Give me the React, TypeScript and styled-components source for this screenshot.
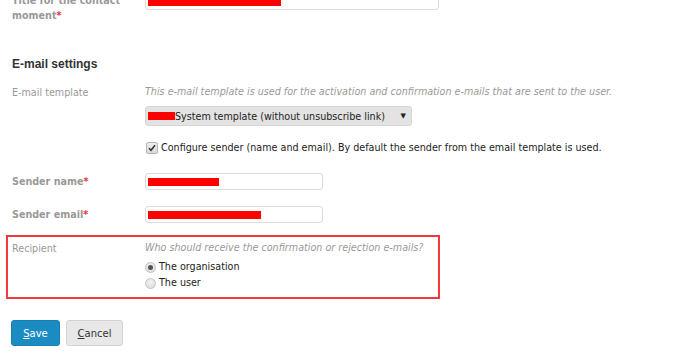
import React from "react";
import styled, { createGlobalStyle } from "styled-components";

const GlobalStyle = createGlobalStyle`
  body {
    margin: 0;
    background: #fff;
    font-family: "DejaVu Sans", Verdana, sans-serif;
    font-size: 9.6px;
    color: #333;
  }
`;

// Whole form.
const Page = styled.div`
  padding: 0 12px;
  margin-top: -7px;
  width: 676px;
`;

// One label / field line.
const FormRow = styled.div<{ $top?: number }>`
  display: flex;
  align-items: flex-start;
  margin-top: ${(p) => p.$top ?? 0}px;
`;

const Label = styled.div<{ $strong?: boolean; $center?: boolean }>`
  width: 133px;
  flex-shrink: 0;
  line-height: 15px;
  color: #999;
  font-weight: ${(p) => (p.$strong ? "bold" : "normal")};
  align-self: ${(p) => (p.$center ? "center" : "flex-start")};
`;

const Required = styled.span`
  color: #e8333a;
`;

const Field = styled.div`
  display: flex;
  flex-direction: column;
`;

const Help = styled.div`
  font-style: italic;
  color: #999;
  line-height: 14px;
`;

const Heading = styled.h3`
  margin: 33px 0 0;
  font-family: "Liberation Sans", Arial, sans-serif;
  font-size: 12px;
  line-height: 16px;
  font-weight: bold;
  color: #333;
`;

const TextInput = styled.div<{ $width: number }>`
  width: ${(p) => p.$width}px;
  height: 15px;
  border: 1px solid #dcdcdc;
  border-radius: 3px;
  background: #fff;
  box-sizing: content-box;
  display: flex;
  align-items: center;
  padding-left: 2px;
`;

const Redacted = styled.span<{ $width: number }>`
  display: inline-block;
  flex-shrink: 0;
  width: ${(p) => p.$width}px;
  height: 8px;
  background: #ff0000;
`;

const Select = styled.div`
  margin-top: 7px;
  width: 263px;
  height: 18px;
  background: #e3e3e3;
  border: 1px solid #d6d6d6;
  border-radius: 3px;
  display: flex;
  align-items: center;
  padding-left: 2px;
  color: #222;
  white-space: nowrap;
`;

const SelectText = styled.span`
  flex: 1;
`;

const Arrow = styled.span`
  font-size: 7px;
  margin-right: 5px;
`;

const CheckLine = styled.label`
  margin-top: 15px;
  display: flex;
  align-items: center;
  gap: 3px;
  line-height: 14px;
  color: #222;
  white-space: nowrap;
`;

const CheckBox = styled.span`
  width: 10px;
  height: 10px;
  margin-left: 1px;
  border: 1px solid #b5b5b5;
  border-radius: 2px;
  background: linear-gradient(#eee, #d8d8d8);
  display: flex;
  align-items: center;
  justify-content: center;
`;

const RecipientBox = styled.div`
  margin: 12px 0 0 -6px;
  width: 426px;
  border: 2px solid #f23a3a;
  padding: 4px 0 6px 4px;
`;

const RadioLine = styled.label<{ $top?: number }>`
  margin-top: ${(p) => p.$top ?? 0}px;
  display: flex;
  align-items: center;
  gap: 3px;
  line-height: 16px;
  color: #222;
`;

const RadioDot = styled.span<{ $on?: boolean }>`
  width: 11px;
  height: 11px;
  border-radius: 50%;
  border: 1px solid #c4c4c4;
  background: radial-gradient(circle at 50% 35%, #f2f2f2, #d9d9d9);
  display: flex;
  align-items: center;
  justify-content: center;
  box-sizing: border-box;
  &::after {
    content: "";
    display: ${(p) => (p.$on ? "block" : "none")};
    width: 5px;
    height: 5px;
    border-radius: 50%;
    background: #555;
  }
`;

const Actions = styled.div`
  margin: 21px 0 0 -1px;
  display: flex;
  gap: 6px;
`;

const Button = styled.button<{ $primary?: boolean; $width: number }>`
  width: ${(p) => p.$width}px;
  height: 26px;
  padding: 0;
  border-radius: 3px;
  font-family: "DejaVu Sans", Verdana, sans-serif;
  font-size: 10px;
  border: 1px solid ${(p) => (p.$primary ? "#1780b3" : "#d2d2d2")};
  background: ${(p) => (p.$primary ? "#1b8cc2" : "#e8e8e8")};
  color: ${(p) => (p.$primary ? "#fff" : "#333")};
  cursor: pointer;
  & u {
    text-decoration: underline;
  }
`;

const App = () => {
  return (
    <>
      <GlobalStyle />
      <Page>
        <FormRow>
          <Label $strong>
            Title for the contact moment<Required>*</Required>
          </Label>
          <TextInput $width={290}>
            <Redacted $width={133} />
          </TextInput>
        </FormRow>

        <Heading>E-mail settings</Heading>

        <FormRow $top={13}>
          <Label>E-mail template</Label>
          <Field>
            <Help>
              This e-mail template is used for the activation and confirmation
              e-mails that are sent to the user.
            </Help>
            <Select>
              <Redacted $width={27} />
              <SelectText>System template (without unsubscribe link)</SelectText>
              <Arrow>▼</Arrow>
            </Select>
            <CheckLine>
              <CheckBox>
                <svg width="8" height="8" viewBox="0 0 8 8">
                  <path d="M1 4.2 L3 6.3 L7 1.2" fill="none" stroke="#333" strokeWidth="1.5" />
                </svg>
              </CheckBox>
              Configure sender (name and email). By default the sender from the
              email template is used.
            </CheckLine>
          </Field>
        </FormRow>

        <FormRow $top={18}>
          <Label $strong $center>
            Sender name<Required>*</Required>
          </Label>
          <TextInput $width={174}>
            <Redacted $width={71} />
          </TextInput>
        </FormRow>

        <FormRow $top={16}>
          <Label $strong $center>
            Sender email<Required>*</Required>
          </Label>
          <TextInput $width={174}>
            <Redacted $width={113} />
          </TextInput>
        </FormRow>

        <RecipientBox>
          <FormRow>
            <Label>Recipient</Label>
            <Field>
              <Help>Who should receive the confirmation or rejection e-mails?</Help>
              <RadioLine $top={4}>
                <RadioDot $on />
                The organisation
              </RadioLine>
              <RadioLine>
                <RadioDot />
                The user
              </RadioLine>
            </Field>
          </FormRow>
        </RecipientBox>

        <Actions>
          <Button $primary $width={49}>
            <u>S</u>ave
          </Button>
          <Button $width={57}>
            <u>C</u>ancel
          </Button>
        </Actions>
      </Page>
    </>
  );
};

export default App;
